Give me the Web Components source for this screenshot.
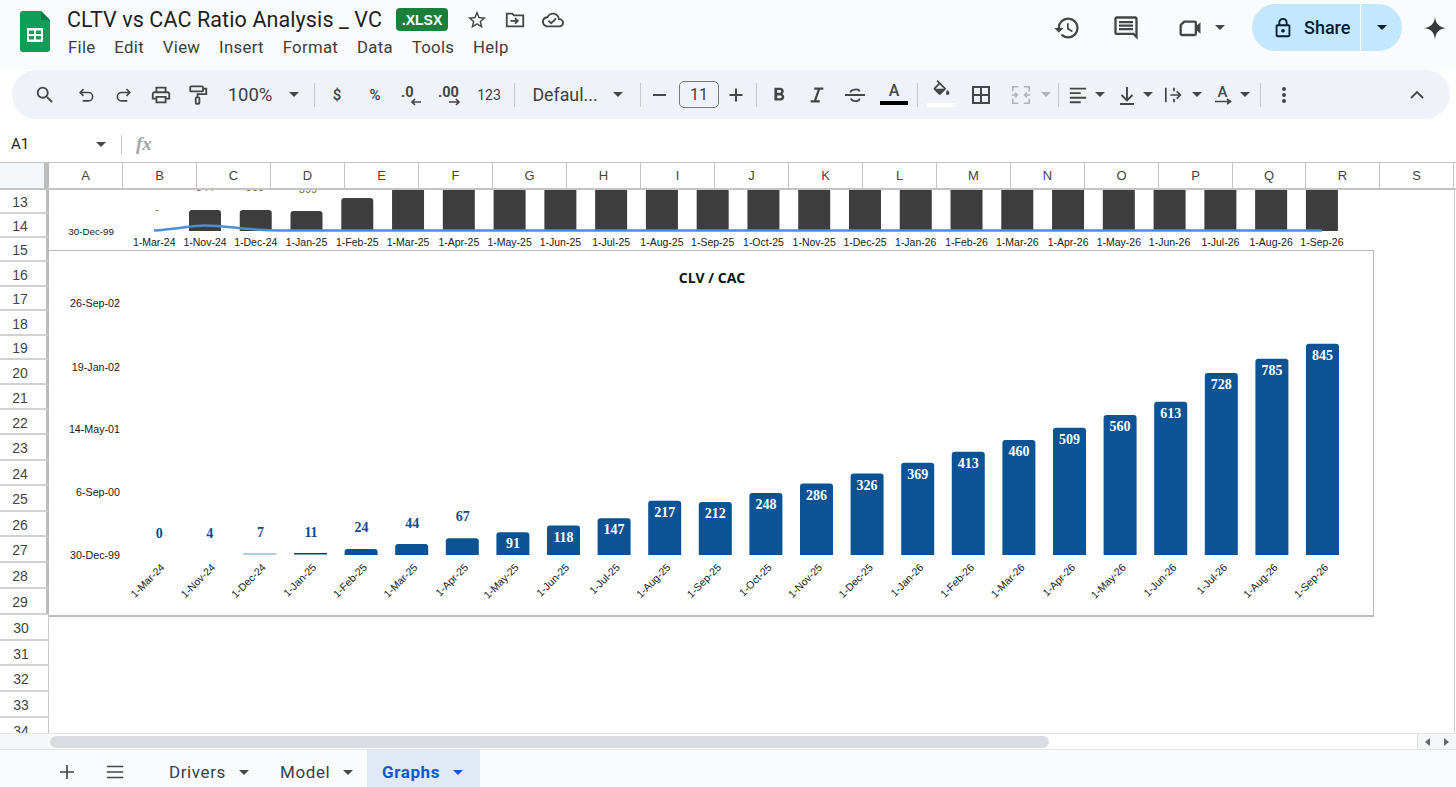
<!DOCTYPE html>
<html lang="en">
<head>
<meta charset="utf-8">
<title>CLTV vs CAC Ratio Analysis _ VC</title>
<style>
    html, body { margin: 0; height: 100%; overflow: hidden; background: #fff; }
    body { display: flex; flex-direction: column; height: 787px; font-family: Roboto, "Liberation Sans", sans-serif; }
</style>
</head>
<body>
<gs-header></gs-header>
<gs-toolbar></gs-toolbar>
<gs-formula></gs-formula>
<gs-grid>
    <gs-top-chart></gs-top-chart>
    <gs-ratio-chart></gs-ratio-chart>
</gs-grid>
<gs-tabs></gs-tabs>

<script>
const icon = (d, size = 24, fill = '#444746') =>
    `<svg width="${size}" height="${size}" viewBox="0 0 24 24" fill="${fill}"><path d="${d}"/></svg>`;
const line = (inner, size = 24, color = '#444746', sw = 2, box = 24) =>
    `<svg width="${size}" height="${size}" viewBox="0 0 ${box} ${box}" fill="none" stroke="${color}" stroke-width="${sw}">${inner}</svg>`;
const caret = (color = '#444746') =>
    `<svg width="10" height="5" viewBox="0 0 10 5" fill="${color}"><path d="M0 0h10L5 5z"/></svg>`;

const months = ['1-Mar-24', '1-Nov-24', '1-Dec-24', '1-Jan-25', '1-Feb-25', '1-Mar-25', '1-Apr-25', '1-May-25',
    '1-Jun-25', '1-Jul-25', '1-Aug-25', '1-Sep-25', '1-Oct-25', '1-Nov-25', '1-Dec-25', '1-Jan-26', '1-Feb-26',
    '1-Mar-26', '1-Apr-26', '1-May-26', '1-Jun-26', '1-Jul-26', '1-Aug-26', '1-Sep-26'];
const roundedBar = (cx, top, bottom, w) => {
    const r = Math.min(3, bottom - top);
    return `M${cx - w / 2} ${bottom}V${top + r}q0-${r} ${r}-${r}H${cx + w / 2 - r}q${r} 0 ${r} ${r}V${bottom}z`;
};

class GsHeader extends HTMLElement {
    connectedCallback() {
        this.attachShadow({ mode: 'open' });
        const menu = ['File', 'Edit', 'View', 'Insert', 'Format', 'Data', 'Tools', 'Help'];
        this.shadowRoot.innerHTML = `
            <style>
                :host {
                    display: flex;
                    flex: none;
                    height: 70px;
                    box-sizing: border-box;
                    padding: 4px 8px 0 20px;
                    background: #f9fbfd;
                    color: #1f1f1f;
                    font-family: Roboto, "Liberation Sans", sans-serif;
                }
                .logo { margin-top: 7px; flex: none; }
                .titles { margin-left: 17px; display: flex; flex-direction: column; }
                .top { display: flex; align-items: center; height: 31px; }
                .name { font-size: 21.5px; letter-spacing: .1px; white-space: nowrap; }
                .badge {
                    margin-left: 14px;
                    width: 52px;
                    height: 23px;
                    border-radius: 4px;
                    background: #188038;
                    color: #fff;
                    font: 700 14px "Liberation Sans", sans-serif;
                    display: flex;
                    align-items: center;
                    justify-content: center;
                }
                .star { margin-left: 18px; display: flex; }
                .move { margin-left: 16px; display: flex; }
                .cloud { margin-left: 16px; display: flex; }
                .menu { display: flex; gap: 18.8px; margin-top: 2px; margin-left: 1px; font-size: 16.8px; letter-spacing: .3px; color: #3c4043; }
                .right { margin-left: auto; display: flex; align-items: center; height: 47px; }
                .right > span { display: flex; }
                .share {
                    margin-left: 27px;
                    width: 150px;
                    height: 47px;
                    border-radius: 24px;
                    background: #c2e7ff;
                    display: flex;
                    align-items: center;
                    color: #001d35;
                    font-size: 18px;
                    font-weight: 500;
                }
                .share .main { width: 109px; display: flex; align-items: center; box-sizing: border-box; padding-left: 20px; gap: 10px; height: 100%; border-right: 1px solid #f9fbfd; }
                .share .drop { flex: 1; display: flex; justify-content: center; }
            </style>
            <svg class="logo" width="30" height="41" viewBox="0 0 30 41">
                <path d="M3 0h18l9 9v29a3 3 0 0 1-3 3H3a3 3 0 0 1-3-3V3a3 3 0 0 1 3-3z" fill="#0f9d58"/>
                <path d="M21 0l9 9h-9z" fill="#0b7a43"/>
                <path d="M7 17h16v14H7z" fill="#fff"/>
                <path d="M9 19.5h5v3.5H9zM16 19.5h5v3.5h-5zM9 25h5v3.5H9zM16 25h5v3.5h-5z" fill="#0f9d58"/>
            </svg>
            <div class="titles">
                <div class="top">
                    <span class="name">CLTV vs CAC Ratio Analysis _ VC</span>
                    <span class="badge">.XLSX</span>
                    <span class="star">${icon('M22 9.24l-7.19-.62L12 2 9.19 8.63 2 9.24l5.46 4.73L5.82 21 12 17.27 18.18 21l-1.63-7.03L22 9.24zM12 15.4l-3.76 2.27 1-4.28-3.32-2.88 4.38-.38L12 6.1l1.71 4.04 4.38.38-3.32 2.88 1 4.28L12 15.4z', 22)}</span>
                    <span class="move">${line('<path d="M3 19V5h6l2 2h10v12z"/><path d="M7 13h8M12 10l3 3-3 3"/>', 22)}</span>
                    <span class="cloud">${icon('M19.35 10.04C18.67 6.59 15.64 4 12 4 9.11 4 6.6 5.64 5.35 8.04 2.34 8.36 0 10.91 0 14c0 3.31 2.69 6 6 6h13c2.76 0 5-2.24 5-5 0-2.64-2.05-4.78-4.65-4.96zM19 18H6c-2.21 0-4-1.79-4-4 0-2.05 1.53-3.76 3.56-3.97l1.07-.11.5-.95C8.08 7.14 9.94 6 12 6c2.62 0 4.88 1.86 5.39 4.43l.3 1.5 1.53.11c1.56.1 2.78 1.41 2.78 2.96 0 1.65-1.35 3-3 3zm-9-3.82l-2.09-2.09L6.5 13.5 10 17l6.01-6.01-1.41-1.41z', 22)}</span>
                </div>
                <div class="menu">${menu.map(m => `<span>${m}</span>`).join('')}</div>
            </div>
            <div class="right">
                <span>${icon('M13 3a9 9 0 0 0-9 9H1l3.89 3.89.07.14L9 12H6c0-3.87 3.13-7 7-7s7 3.13 7 7-3.13 7-7 7c-1.93 0-3.68-.79-4.94-2.06l-1.42 1.42A8.954 8.954 0 0 0 13 21a9 9 0 0 0 0-18zm-1 5v5l4.28 2.54.72-1.21-3.5-2.08V8H12z', 28)}</span>
                <span style="margin-left:31px">${icon('M20 17.17L18.83 16H4V4h16v13.17zM20 2H4c-1.1 0-2 .9-2 2v12c0 1.1.9 2 2 2h14l4 4V4c0-1.1-.9-2-2-2zM6 12h12v2H6zm0-3h12v2H6zm0-3h12v2H6z', 28)}</span>
                <span style="margin-left:36px">${line('<path d="M7 6.5H16a1 1 0 0 1 1 1V17a1 1 0 0 1-1 1H5a1 1 0 0 1-1-1V9.5z"/><path d="M17 10.5L21 7v10l-4-3.5z" fill="#444746" stroke="none"/>', 28)}</span>
                <span style="margin-left:11px">${caret()}</span>
                <div class="share">
                    <div class="main">
                        ${icon('M18 8h-1V6c0-2.76-2.24-5-5-5S7 3.24 7 6v2H6c-1.1 0-2 .9-2 2v10c0 1.1.9 2 2 2h12c1.1 0 2-.9 2-2V10c0-1.1-.9-2-2-2zM9 6c0-1.66 1.34-3 3-3s3 1.34 3 3v2H9V6zm9 14H6V10h12v10zm-6-3c1.1 0 2-.9 2-2s-.9-2-2-2-2 .9-2 2 .9 2 2 2z', 22, '#001d35')}
                        <span>Share</span>
                    </div>
                    <div class="drop">${caret('#001d35')}</div>
                </div>
                <span style="margin-left:20px">${icon('M12 1.5C12.6 8 16 11.4 22.5 12 16 12.6 12.6 16 12 22.5 11.4 16 8 12.6 1.5 12 8 11.4 11.4 8 12 1.5z', 26, '#37393b')}</span>
            </div>
        `;
    }
}

class GsToolbar extends HTMLElement {
    connectedCallback() {
        this.attachShadow({ mode: 'open' });
        const sep = '<i class="sep"></i>';
        const c = caret();
        // [centre x in the window, item width, markup]
        const items = [
            [45, 22, icon('M15.5 14h-.79l-.28-.27A6.471 6.471 0 0 0 16 9.5 6.5 6.5 0 1 0 9.5 16c1.61 0 3.09-.59 4.23-1.57l.27.28v.79l5 4.99L20.49 19l-4.99-5zm-6 0C7.01 14 5 11.99 5 9.5S7.01 5 9.5 5 14 7.01 14 9.5 11.99 14 9.5 14z', 22)],
            [86, 20, line('<path d="M9 5L5 9l4 4M5 9h10a4.5 4.5 0 0 1 0 10H8"/>', 20, '#444746', 1.9)],
            [124, 20, line('<path d="M15 5l4 4-4 4M19 9H9a4.5 4.5 0 0 0 0 10h7"/>', 20, '#444746', 1.9)],
            [161, 22, icon('M19 8h-1V3H6v5H5c-1.66 0-3 1.34-3 3v6h4v4h12v-4h4v-6c0-1.66-1.34-3-3-3zM8 5h8v3H8V5zm8 12v2H8v-4h8v2zm2-2v-2H6v2H4v-4c0-.55.45-1 1-1h14c.55 0 1 .45 1 1v4h-2z', 22)],
            [198, 22, line('<rect x="3.5" y="2.5" width="14" height="5.5" rx="1"/><path d="M17.5 5H21v6H11.5v3.5"/><rect x="9.5" y="14.5" width="4" height="7" rx="1"/>', 22)],
            [250, 48, '<span class="txt">100%</span>'],
            [294, 10, c],
            [314, 1, sep],
            [337, 12, '<span class="txt sm">$</span>'],
            [375, 16, '<span class="txt sm">%</span>'],
            [412, 24, `<svg width="24" height="24" viewBox="0 0 24 24"><text x="1" y="14" class="num">.0</text><path d="M21 19h-9m3-3l-3 3 3 3" fill="none" stroke="#444746" stroke-width="1.7"/></svg>`],
            [450, 26, `<svg width="26" height="24" viewBox="0 0 26 24"><text x="1" y="14" class="num">.00</text><path d="M12 19h10m-3-3l3 3-3 3" fill="none" stroke="#444746" stroke-width="1.7"/></svg>`],
            [489, 24, '<span class="txt xs">123</span>'],
            [514, 1, sep],
            [565, 68, '<span class="txt name">Defaul...</span>'],
            [618, 10, c],
            [640, 1, sep],
            [659, 14, '<i class="dash"></i>'],
            [699, 40, '<span class="box">11</span>'],
            [736, 20, line('<path d="M10 3.5v13M3.5 10h13"/>', 20, '#444746', 2, 20)],
            [756, 1, sep],
            [779, 22, icon('M15.6 10.79c.97-.67 1.65-1.77 1.65-2.79 0-2.26-1.75-4-4-4H7v14h7.04c2.09 0 3.71-1.7 3.71-3.79 0-1.52-.86-2.82-2.15-3.42zM10 6.5h3c.83 0 1.5.67 1.5 1.5s-.67 1.5-1.5 1.5h-3v-3zm3.5 9H10v-3h3.5c.83 0 1.5.67 1.5 1.5s-.67 1.5-1.5 1.5z', 24)],
            [817, 22, line('<path d="M9 5h10M5 19h10M14.5 5L9.5 19"/>', 22, '#444746', 2.4)],
            [855, 24, line('<path d="M2 12h20M7.5 9.5C7.5 6.5 16 5 16.5 8.5M8 15.5c1 3.5 8.5 3.5 8.5 0"/>', 24, '#444746', 1.8)],
            [894, 28, '<span class="color"><b>A</b><i></i></span>'],
            [917, 1, sep],
            [941, 28, `<span class="fill">${icon('M16.56 8.94L7.62 0 6.21 1.41l2.38 2.38-5.15 5.15c-.59.59-.59 1.54 0 2.12l5.5 5.5c.29.29.68.44 1.06.44s.77-.15 1.06-.44l5.5-5.5c.59-.58.59-1.53 0-2.12zM5.21 10L10 5.21 14.79 10H5.21zM19 11.5s-2 2.17-2 3.5c0 1.1.9 2 2 2s2-.9 2-2c0-1.33-2-3.5-2-3.5z', 21)}<i></i></span>`],
            [981, 20, line('<rect x="2" y="2" width="16" height="16"/><path d="M10 2v16M2 10h16"/>', 20, '#444746', 2, 20)],
            [1021, 22, line('<path d="M9 3H3v5M3 16v5h6M15 3h6v5M21 16v5h-6M2 12h6m-2.5-2.5L8 12l-2.5 2.5M22 12h-6m2.5-2.5L16 12l2.5 2.5"/>', 22, '#b0b3b6', 1.8)],
            [1046, 10, caret('#b0b3b6')],
            [1058, 1, sep],
            [1078, 20, line('<path d="M2 4h18M2 9h12M2 14h18M2 19h12"/>', 20, '#444746', 2, 22)],
            [1100, 10, c],
            [1127, 20, line('<path d="M10 2v13M4.5 10l5.5 5.5 5.5-5.5M3 19h14"/>', 20, '#444746', 1.9, 20)],
            [1148, 10, c],
            [1174, 20, line('<path d="M2 3v16M7 11h11M14 7l4 4-4 4M11 3v4M11 15v4"/>', 20, '#444746', 1.9, 22)],
            [1197, 10, c],
            [1224, 20, `<svg width="20" height="24" viewBox="0 0 20 24"><text x="3.5" y="14" class="rot">A</text><path d="M1 18.5h15m-3-2.5l3.500 2.500-3.500 2.500" fill="none" stroke="#444746" stroke-width="1.7"/></svg>`],
            [1245, 10, c],
            [1260, 1, sep],
            [1284, 6, '<svg width="6" height="18" viewBox="0 0 6 18" fill="#444746"><circle cx="3" cy="3" r="2"/><circle cx="3" cy="9" r="2"/><circle cx="3" cy="15" r="2"/></svg>'],
            [1417, 16, line('<path d="M2 11l6-6 6 6"/>', 16, '#444746', 1.9, 16)]
        ];
        let prevEnd = 12;
        const html = items.map(([center, width, markup]) => {
            const gap = center - width / 2 - prevEnd;
            prevEnd = center + width / 2;
            return `<span class="it" style="width:${width}px;margin-left:${gap}px">${markup}</span>`;
        }).join('');
        this.shadowRoot.innerHTML = `
            <style>
                :host {
                    display: flex;
                    flex: none;
                    align-items: center;
                    height: 49px;
                    margin: 0 6px 0 12px;
                    border-radius: 25px;
                    background: #eff3f9;
                    color: #444746;
                    font-family: Roboto, "Liberation Sans", sans-serif;
                }
                .it { display: flex; align-items: center; justify-content: center; flex: none; height: 28px; }
                .txt { font-size: 18.5px; white-space: nowrap; color: #3c4043; }
                .txt.name { font-size: 17.8px; }
                .txt.sm { font-size: 15px; font-weight: 500; }
                .txt.xs { font-size: 14px; }
                .sep { width: 1px; height: 24px; background: #c7c7c7; }
                .dash { width: 13px; height: 2px; background: #444746; }
                .box {
                    box-sizing: border-box;
                    width: 40px;
                    height: 27px;
                    border: 1px solid #747775;
                    border-radius: 5px;
                    display: flex;
                    align-items: center;
                    justify-content: center;
                    font-size: 16px;
                    color: #3c4043;
                }
                .color { display: flex; flex-direction: column; align-items: center; width: 28px; height: 28px; }
                .color b { font-weight: 500; font-size: 16px; line-height: 19px; }
                .color i { width: 28px; height: 4px; background: #000; margin-top: 1px; }
                .fill { display: flex; flex-direction: column; align-items: center; height: 30px; }
                .fill i { width: 28px; height: 4px; background: #fff; margin-top: 2px; }
                svg { display: block; }
                svg .num { font: 700 14.5px Roboto, sans-serif; fill: #444746; }
                svg .rot { font: 500 15px Roboto, sans-serif; fill: #444746; }
            </style>
            ${html}
        `;
    }
}

class GsFormula extends HTMLElement {
    connectedCallback() {
        this.attachShadow({ mode: 'open' });
        this.shadowRoot.innerHTML = `
            <style>
                :host {
                    display: flex;
                    flex: none;
                    align-items: center;
                    box-sizing: border-box;
                    height: 43px;
                    padding: 11px 0 4px 11px;
                    background: #fff;
                    font: 15px Roboto, "Liberation Sans", sans-serif;
                    color: #1f1f1f;
                }
                .name { width: 85px; }
                .sep { width: 1px; height: 19px; background: #c7c7c7; margin: 0 14px 0 15px; }
                .fx { font: italic 700 19px "Liberation Serif", serif; color: #a3a6a8; }
            </style>
            <span class="name">A1</span>
            ${caret()}
            <i class="sep"></i>
            <span class="fx">fx</span>
        `;
    }
}

class GsGrid extends HTMLElement {
    connectedCallback() {
        this.attachShadow({ mode: 'open' });
        const letters = 'ABCDEFGHIJKLMNOPQRS'.split('');
        const heights = [24, 24, 24, 25, 24, 25, 24, 25, 25, 25, 26, 25, 26, 25, 26, 26, 26, 26, 25, 26, 26, 25];
        this.shadowRoot.innerHTML = `
            <style>
                :host {
                    display: flex;
                    flex-direction: column;
                    flex: none;
                    height: 588px;
                    background: #fff;
                    color: #444;
                    font-family: "Liberation Sans", Arial, sans-serif;
                }
                .cols { display: flex; height: 28px; box-sizing: border-box; border-top: 1px solid #c4c4c4; border-bottom: 2px solid #c4c4c4; flex: none; }
                .corner { width: 44px; background: #f4f7fa; border-right: 5px solid #bcbcbc; flex: none; }
                .col { width: 73px; flex: none; border-right: 1px solid #c4c4c4; display: flex; align-items: center; justify-content: center; font-size: 13px; }
                .col:nth-child(18) { width: 72px; }
                .body { position: relative; flex: 1; display: flex; overflow: hidden; min-height: 0; }
                .rows { width: 49px; flex: none; box-sizing: border-box; }
                .row {
                    box-sizing: border-box;
                    width: 49px;
                    display: flex;
                    align-items: center;
                    justify-content: center;
                    padding: 2px 6px 0 0;
                    font-size: 14px;
                    border-bottom: 2px solid #d2d2d2;
                    border-right: 3px solid #bcbcbc;
                }
                .row.low { border-right: 1px solid #c9c9c9; }
                .sheet { flex: 1; position: relative; border-right: 1px solid #d0d0d0; margin-right: 1px; }
                .scroll { flex: none; height: 15px; display: flex; align-items: stretch; border-top: 1px solid #e6e6e6; border-bottom: 1px solid #e6e6e6; background: #fff; }
                .scroll .left { width: 49px; background: #f5f6f7; flex: none; }
                .thumb { width: 999px; margin: 2px 0 1px 1px; background: #d9dce0; border-radius: 6px; flex: none; }
                .arrows { margin-left: auto; display: flex; width: 38px; background: #f5f6f7; border-left: 1px solid #e0e0e0; align-items: center; justify-content: space-around; }
                ::slotted(*) { position: absolute; }
            </style>
            <div class="cols">
                <div class="corner"></div>
                ${letters.map(l => `<div class="col">${l}</div>`).join('')}
            </div>
            <div class="body">
                <div class="rows">
                    ${heights.map((h, i) => `<div class="row ${i + 13 > 29 ? 'low' : ''}" style="height:${h}px">${i + 13}</div>`).join('')}
                </div>
                <div class="sheet"><slot></slot></div>
            </div>
            <div class="scroll">
                <div class="left"></div>
                <div class="thumb"></div>
                <div class="arrows">
                    <svg width="5" height="8" viewBox="0 0 5 8" fill="#666"><path d="M5 0v8L0 4z"/></svg>
                    <svg width="5" height="8" viewBox="0 0 5 8" fill="#666"><path d="M0 0v8l5-4z"/></svg>
                </div>
            </div>
        `;
    }
}

class GsTopChart extends HTMLElement {
    connectedCallback() {
        this.attachShadow({ mode: 'open' });
        const barX = i => 154.2 + i * 50.77;
        const tops = [null, 210, 210, 211, 198];
        const bars = months.map((m, i) => {
            if (i === 0) return '';
            const top = i < tops.length ? tops[i] : 186;
            return `<path d="${roundedBar(barX(i), top, 231, 32)}" fill="#3d3d3d"/>`;
        }).join('');
        const labels = months.map((m, i) =>
            `<text x="${barX(i)}" y="246" text-anchor="middle" class="x">${m}</text>`).join('');
        this.shadowRoot.innerHTML = `
            <style>
                :host { display: block; left: 0; top: 0; width: 1325px; height: 61px; box-sizing: border-box; border-bottom: 1px solid #b9b9b9; }
                svg { display: block; overflow: hidden; }
                text { font-family: "Liberation Sans", Arial, sans-serif; fill: #222; }
                .x { font-size: 10.5px; }
                .y { font-size: 9.8px; }
                .v { font-size: 11px; fill: #7d7320; }
            </style>
            <svg width="1325" height="60" viewBox="49 190 1325 60">
                ${bars}
                <path d="M154 230.5C175 229.5 190 225.5 205 225.5S235 228 255 229.5 300 230.5 330 230.5H1322" fill="none" stroke="#4a8fd6" stroke-width="2.4"/>
                <text x="114" y="234.5" text-anchor="end" class="y">30-Dec-99</text>
                <text x="157" y="213" text-anchor="middle" class="v">-</text>
                <text x="205" y="191" text-anchor="middle" class="v">344</text>
                <text x="255" y="191" text-anchor="middle" class="v">355</text>
                <text x="308" y="193" text-anchor="middle" class="v">399</text>
                ${labels}
            </svg>
        `;
    }
}

class GsRatioChart extends HTMLElement {
    connectedCallback() {
        this.attachShadow({ mode: 'open' });
        const values = [0, 4, 7, 11, 24, 44, 67, 91, 118, 147, 217, 212, 248, 286, 326, 369, 413, 460, 509, 560, 613, 728, 785, 845];
        const outsideY = [538, 537.5, 536.5, 536.5, 531.5, 527.5, 521];
        const base = 555;
        const barX = i => 158.7 + i * 50.6;
        const parts = values.map((v, i) => {
            const cx = barX(i);
            const top = base - v * 0.25;
            let out = '';
            if (v === 7) out += `<rect x="${cx - 16.5}" y="553.5" width="33" height="1" fill="#6d9ac6"/>`;
            else if (v === 11) out += `<rect x="${cx - 16.5}" y="553" width="33" height="1.5" fill="#0b3f87"/>`;
            else if (v > 11) out += `<path d="${roundedBar(cx, top, base, 33)}" fill="#0b5394"/>`;
            if (i < outsideY.length) out += `<text x="${cx + 0.5}" y="${outsideY[i]}" text-anchor="middle" class="v">${v}</text>`;
            else out += `<text x="${cx}" y="${top + 16}" text-anchor="middle" class="v in">${v}</text>`;
            const ax = cx + 6.5, ay = 568;
            out += `<text x="${ax}" y="${ay}" text-anchor="end" transform="rotate(-45 ${ax} ${ay})" class="x">${months[i]}</text>`;
            return out;
        }).join('');
        const axis = [['26-Sep-02', 307], ['19-Jan-02', 371], ['14-May-01', 433], ['6-Sep-00', 496], ['30-Dec-99', 559]];
        this.shadowRoot.innerHTML = `
            <style>
                :host { display: block; left: 0; top: 61px; width: 1325px; height: 366px; box-sizing: border-box; border-bottom: 2px solid #bcbcbc; border-right: 1px solid #bcbcbc; }
                svg { display: block; overflow: hidden; }
                text { font-family: "Liberation Sans", Arial, sans-serif; fill: #1a1a1a; }
                .title { font: 700 14px "Open Sans", "Liberation Sans", sans-serif; fill: #111; }
                .y { font-size: 10.7px; }
                .x { font-size: 10.5px; }
                .v { font: 700 14px "Liberation Serif", serif; fill: #0f4c8f; }
                .in { fill: #fff; }
            </style>
            <svg width="1325" height="364" viewBox="49 251 1325 364">
                <text x="712" y="283" text-anchor="middle" class="title">CLV / CAC</text>
                ${axis.map(([t, y]) => `<text x="120" y="${y}" text-anchor="end" class="y">${t}</text>`).join('')}
                ${parts}
            </svg>
        `;
    }
}

class GsTabs extends HTMLElement {
    connectedCallback() {
        this.attachShadow({ mode: 'open' });
        this.shadowRoot.innerHTML = `
            <style>
                :host {
                    display: flex;
                    flex: 1;
                    min-height: 0;
                    align-items: stretch;
                    padding-left: 57px;
                    background: #f9fbfd;
                    color: #3c4043;
                    font: 400 17px Roboto, "Liberation Sans", sans-serif;
                    letter-spacing: .6px;
                }
                .ic { display: flex; align-items: center; padding-top: 7px; }
                .tab { display: flex; align-items: center; gap: 13px; box-sizing: border-box; padding: 7px 0 0 15px; height: 100%; }
                .drivers { margin-left: 29px; width: 111px; }
                .model { width: 102px; }
                .active { width: 113px; background: #e1e9f7; color: #0b57d0; font-weight: 700; }
            </style>
            <span class="ic">${line('<path d="M10 3v14M3 10h14"/>', 20, '#444746', 1.7, 20)}</span>
            <span class="ic" style="margin-left:28px">${line('<path d="M2 5h18M2 11h18M2 17h18"/>', 20, '#444746', 1.8, 22)}</span>
            <div class="tab drivers"><span>Drivers</span>${caret()}</div>
            <div class="tab model"><span>Model</span>${caret()}</div>
            <div class="tab active"><span>Graphs</span>${caret('#0b57d0')}</div>
        `;
    }
}

customElements.define('gs-header', GsHeader);
customElements.define('gs-toolbar', GsToolbar);
customElements.define('gs-formula', GsFormula);
customElements.define('gs-grid', GsGrid);
customElements.define('gs-top-chart', GsTopChart);
customElements.define('gs-ratio-chart', GsRatioChart);
customElements.define('gs-tabs', GsTabs);
</script>
</body>
</html>
